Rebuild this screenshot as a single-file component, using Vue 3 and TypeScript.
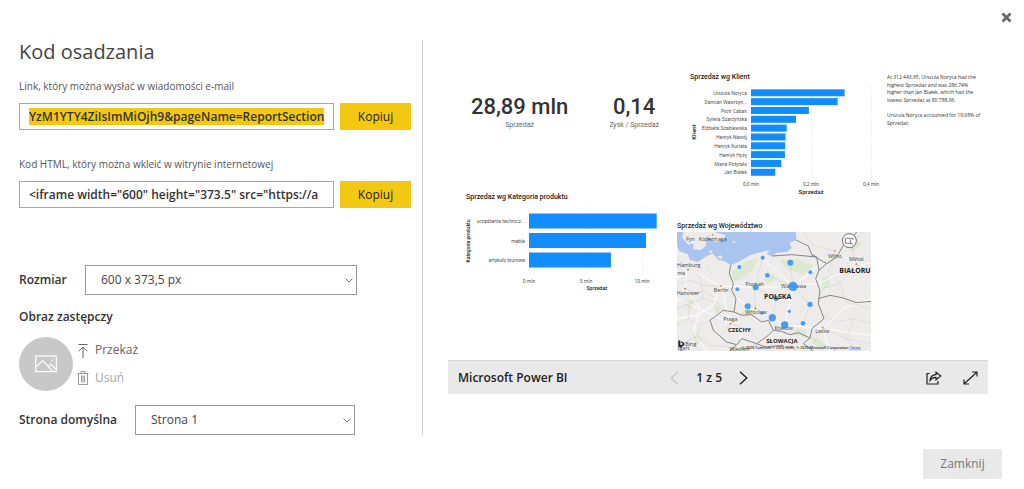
<script setup lang="ts">
import { onMounted, ref } from 'vue'

interface Bar {
  label: string
  value: number
}

const linkInput = ref<HTMLInputElement | null>(null)
const linkCode = ref('YzM1YTY4ZiIsImMiOjh9&pageName=ReportSection')
const htmlCode = ref('<iframe width="600" height="373.5" src="https://a')
const size = ref('600 x 373,5 px')
const page = ref('Strona 1')

const clients: Bar[] = [
  { label: 'Urszula Noryca', value: 0.312 },
  { label: 'Damian Wawrzyn...', value: 0.289 },
  { label: 'Piotr Caban', value: 0.193 },
  { label: 'Sylwia Szarzyńska', value: 0.15 },
  { label: 'Elżbieta Szablewska', value: 0.119 },
  { label: 'Henryk Nawój', value: 0.115 },
  { label: 'Henryk Kuriata', value: 0.114 },
  { label: 'Henryk Hyży', value: 0.113 },
  { label: 'Maria Potyrało', value: 0.101 },
  { label: 'Jan Białek', value: 0.081 },
]

const categories: Bar[] = [
  { label: 'urządzenia technicz...', value: 11.3 },
  { label: 'meble', value: 10.35 },
  { label: 'artykuły biurowe', value: 7.25 },
]

const bubbles: [number, number, number][] = [
  [208, 155, 6], [278, 127, 6], [361, 142, 9], [421, 171, 6], [292, 180, 7],
  [257, 216, 9], [202, 222, 6], [369, 213, 14], [319, 249, 8], [420, 267, 8],
  [233, 273, 9], [276, 293, 5], [358, 288, 5], [307, 307, 11], [344, 329, 11], [399, 324, 7],
]

const cities: [string, number, number][] = [
  ['Kopenhaga', 128, 77], ['Hamburg', 56, 155], ['Berlin', 153, 231], ['Hanower', 54, 238],
  ['Poznań', 254, 211], ['Warszawa', 371, 219], ['Wrocław', 258, 297], ['Praga', 181, 316],
  ['Kraków', 341, 345], ['Lwów', 457, 354], ['Wilno', 495, 127], ['Mińsk', 559, 136],
  ['Wiedeń', 207, 406], ['Fyn', 61, 77], ['ma', 34, 178], ['tgart', 41, 405],
]

const cityDots: [number, number][] = [
  [128, 59], [54, 163], [153, 212], [46, 220], [181, 325], [495, 107], [559, 146], [458, 337], [256, 280], [237, 401],
]

onMounted(() => {
  linkInput.value?.focus({ preventScroll: true })
  linkInput.value?.select()
})
</script>

<template>
  <div class="dialog">
    <header class="dialog-head">
      <button class="close" type="button" aria-label="Zamknij okno">
        <svg width="11" height="11" viewBox="0 0 11 11">
          <path d="M1.5 1.5 L9.5 9.5 M9.5 1.5 L1.5 9.5" stroke="#666" stroke-width="2.6" fill="none" />
        </svg>
      </button>
    </header>

    <main class="dialog-body">
      <section class="settings">
        <h1>Kod osadzania</h1>

        <div class="field">
          <label for="link">Link, który można wysłać w wiadomości e-mail</label>
          <div class="code-row">
            <input id="link" ref="linkInput" v-model="linkCode" class="code" type="text" readonly />
            <button class="copy" type="button">Kopiuj</button>
          </div>
        </div>

        <div class="field">
          <label for="html">Kod HTML, który można wkleić w witrynie internetowej</label>
          <div class="code-row">
            <input id="html" v-model="htmlCode" class="code" type="text" readonly />
            <button class="copy" type="button">Kopiuj</button>
          </div>
        </div>

        <div class="option size-option">
          <label for="size">Rozmiar</label>
          <div class="picker">
            <select id="size" v-model="size">
              <option>600 x 373,5 px</option>
            </select>
            <svg width="8" height="5" viewBox="0 0 8 5"><path d="M.5 .5 L4 4 L7.5 .5" stroke="#777" fill="none" /></svg>
          </div>
        </div>

        <h2>Obraz zastępczy</h2>
        <div class="placeholder">
          <div class="thumb">
            <svg width="22" height="18" viewBox="0 0 22 18" fill="none" stroke="#fff">
              <rect x=".7" y="1" width="20.6" height="15.6" stroke-width="1.2" />
              <path d="M1 12 L7.5 5.5 L18 16.3 M13.4 11.6 L15.8 9.2 L21 14.5" stroke-width="1.2" />
              <circle cx="17" cy="5.2" r=".5" />
            </svg>
          </div>
          <div class="thumb-actions">
            <button type="button">
              <svg width="12" height="16" viewBox="0 0 12 16" fill="none" stroke="#666">
                <path d="M1.5 2.5 H10.5 M6 16 V5 M1.8 9.2 L6 5 L10.2 9.2" />
              </svg>
              Przekaż
            </button>
            <button type="button" disabled>
              <svg width="12" height="16" viewBox="0 0 12 16" fill="none" stroke="#999">
                <path d="M.5 3.5 H11.5 M4 3 V1.5 H8 V3 M1.5 3.5 V14.5 H10.5 V3.5 M4.5 5.5 V12.5 M6 5.5 V12.5 M7.5 5.5 V12.5" />
              </svg>
              Usuń
            </button>
          </div>
        </div>

        <div class="option page-option">
          <label for="page">Strona domyślna</label>
          <div class="picker">
            <select id="page" v-model="page">
              <option>Strona 1</option>
            </select>
            <svg width="8" height="5" viewBox="0 0 8 5"><path d="M.5 .5 L4 4 L7.5 .5" stroke="#777" fill="none" /></svg>
          </div>
        </div>
      </section>

      <section class="preview">
        <div class="report">
          <div class="report-left">
            <div class="kpis">
              <div class="kpi"><strong>28,89 mln</strong><span>Sprzedaż</span></div>
              <div class="kpi"><strong>0,14</strong><span>Zysk / Sprzedaż</span></div>
            </div>
            <h3>Sprzedaż wg Kategoria produktu</h3>
            <svg class="chart" width="205" height="90" viewBox="0 0 205 90">
              <path class="grid" d="M63.5 4 V72 M119.5 4 V72 M176.5 4 V72" />
              <g v-for="(c, i) in categories" :key="c.label">
                <text class="tick end" x="59" :y="20 + i * 19.5">{{ c.label }}</text>
                <rect class="bar" x="63" :y="10.5 + i * 19.5" :width="c.value * 11.3" height="15" />
              </g>
              <text class="tick mid" x="63" y="80">0 mln</text>
              <text class="tick mid" x="120" y="80">5 mln</text>
              <text class="tick mid" x="176" y="80">10 mln</text>
              <text class="axis small mid" x="131" y="87">Sprzedaż</text>
              <text class="axis small mid" transform="translate(4 38) rotate(-90)">Kategoria produktu</text>
            </svg>
          </div>

          <div class="report-right">
            <div class="client-row">
              <div>
                <h3 class="indented">Sprzedaż wg Klient</h3>
                <svg class="chart" width="208" height="115" viewBox="0 0 208 115">
                  <path class="grid" d="M74.5 4 V96 M134.5 4 V96 M194.5 4 V96" />
                  <g v-for="(c, i) in clients" :key="c.label">
                    <text class="tick end" x="70" :y="12 + i * 8.83">{{ c.label }}</text>
                    <rect class="bar" x="74" :y="6.3 + i * 8.83" :width="c.value * 300" height="7" />
                  </g>
                  <text class="tick mid" x="74" y="103">0,0 mln</text>
                  <text class="tick mid" x="134" y="103">0,2 mln</text>
                  <text class="tick mid" x="194" y="103">0,4 mln</text>
                  <text class="axis mid" x="134" y="111">Sprzedaż</text>
                  <text class="axis mid" transform="translate(19 49) rotate(-90)">Klient</text>
                </svg>
              </div>
              <div class="story">
                <p>At 312 443,95, Urszula Noryca had the highest Sprzedaż and was 286,74% higher than Jan Białek, which had the lowest Sprzedaż at 80 788,96.</p>
                <p>Urszula Noryca accounted for 19,68% of Sprzedaż.</p>
              </div>
            </div>
            <h3>Sprzedaż wg Województwo</h3>
            <svg class="map" width="194" height="119" viewBox="21 50 582 357">
              <rect x="21" y="50" width="582" height="357" fill="#eeecea" />
              <g fill="#dce8cf">
                <path d="M185 170 L225 140 L262 125 L250 160 L215 190 L190 200 Z" />
                <path d="M330 135 L380 130 L430 150 L400 180 L350 160 Z" />
                <path d="M225 280 L262 270 L250 298 L210 300 Z M420 360 L450 375 L480 400 L440 398 Z" />
                <path d="M40 260 L70 250 L62 285 Z M130 265 L160 280 L140 295 Z M455 190 L475 180 L480 210 L458 225 Z M530 95 L560 70 L575 88 L548 108 Z M60 340 L100 370 L80 390 Z" />
                <path d="M375 340 L410 345 L405 365 L365 358 Z M280 190 L310 175 L318 195 L290 205 Z" />
              </g>
              <path fill="#a9c4ee" d="M135 50 H378 L379 74 L358 82 L365 98 L350 110 L318 112 L308 124 L290 115 L300 104 L282 108 L240 120 L205 140 L182 150 L168 140 L145 133 L128 115 L110 122 L84 140 L60 134 L52 115 L28 108 L21 92 V50 H40 L36 66 L55 88 L72 84 L68 102 L92 104 L108 92 L100 75 L112 62 L136 80 L160 74 L167 60 Z" />
              <path fill="#eeecea" d="M45 62 L66 56 L80 70 L72 86 L52 84 Z M86 62 L105 54 L112 78 L102 94 L84 88 Z M116 108 L128 105 L125 115 Z M140 124 L154 120 L158 132 Z M186 80 L194 76 L196 84 Z" />
              <g fill="none" stroke="#fff" stroke-width="3">
                <path d="M21 190 L60 165 L153 212 L254 216 L369 213 L445 205 L520 170 L603 140 M153 212 L181 325 L237 401 M153 212 L233 273 L307 307 L344 329 L457 340 L603 360 M369 213 L344 329 M369 213 L278 127 M369 213 L421 171 L495 107 L560 146 M21 250 L90 280 L181 325 M21 310 L80 300 L130 270 L153 212 L120 160 M50 163 L46 220 L90 280 L70 350 L110 407 M457 340 L520 280 L603 250 M457 340 L480 407" />
              </g>
              <g fill="none" stroke="#d1ccc8" stroke-width="1.5">
                <path d="M21 205 L62 195 L98 210 L153 212 L190 240 M25 130 L54 163 L90 185 L100 250 L60 265 L21 280 M46 220 L75 235 L105 225 L130 245 M60 265 L55 310 L90 330 L125 310 M21 330 L55 310 M90 330 L80 365 L40 380 M80 365 L120 390 L180 395 M100 250 L145 265 L180 300 M254 216 L278 127 M254 216 L256 280 L307 307 M292 180 L369 213 L361 142 M254 216 L319 249 L369 213 L420 267 L399 324 M319 249 L307 307 M456 220 L510 205 L559 146 L603 170 M559 146 L545 90 L575 50 M495 107 L430 90 L400 50 M495 107 L475 170 L510 205 L530 260 L603 280 M460 300 L500 320 L550 310 L603 325 M458 337 L430 385 M458 337 L530 370 L560 407 M550 310 L530 370 L603 385 M181 325 L240 345 L270 380 L237 401 M181 325 L150 365 L170 385 M110 150 L153 212" />
              </g>
              <g fill="none" stroke="#858585" stroke-width="3" stroke-linejoin="round">
                <path d="M182 150 L178 175 L190 205 L185 225 L198 250 L192 290 L215 300 L245 298 L275 320 L295 315 L310 345 L335 348 L360 358 L385 352 L420 368 L426 340 L462 310 L445 265 L450 225 L437 190 L447 165 L440 125 L365 118 L308 122" />
                <path d="M192 290 L160 285 L120 315 L130 345 L170 380 L200 388 L215 370 L260 385 L295 360 L310 345 M200 388 L180 407 M260 385 L285 395 L340 390 M378 74 L415 92 L425 118 L440 125 M425 118 L470 145 L500 125 L520 90 L545 70 L560 50 M470 145 L447 165 M445 250 L480 240 L520 248 L560 262 L603 258 M420 368 L400 385 L430 407" />
              </g>
              <circle v-for="(d, i) in cityDots" :key="'d' + i" :cx="d[0]" :cy="d[1]" r="2.5" fill="#ef5a32" />
              <text v-for="c in cities" :key="c[0]" class="city" :x="c[1]" :y="c[2]">{{ c[0] }}</text>
              <circle v-for="(b, i) in bubbles" :key="'b' + i" :cx="b[0]" :cy="b[1]" :r="b[2]" fill="#2f8df0" fill-opacity=".85" />
              <text class="country" x="323" y="251">POLSKA</text>
              <text class="country minor" x="208" y="349">CZECHY</text>
              <text class="country minor" x="336" y="382">SŁOWACJA</text>
              <text class="country start" x="508" y="172">BIAŁORU</text>
              <circle cx="538" cy="76" r="21" fill="#fff" stroke="#555" stroke-width="2.5" />
              <path d="M540 84 H526 V69 H549 V74 M541 72 V86 L545 83 L548 88" fill="none" stroke="#444" stroke-width="2" />
              <path d="M25 374 L31 377 V390 L40 386 L34 382 L32 377 L43 383 V389 L31 397 L25 393 Z" fill="#222" />
              <text class="bing" x="46" y="391">Bing</text>
              <text class="credit" x="572" y="400">© 2020 TomTom © 2020 HERE, © 2020 Microsoft Corporation <tspan class="terms">Terms</tspan></text>
            </svg>
          </div>
        </div>

        <div class="toolbar">
          <strong>Microsoft Power BI</strong>
          <nav class="pager">
            <button type="button" disabled aria-label="Poprzednia strona">
              <svg width="9" height="14" viewBox="0 0 9 14"><path d="M8 .7 L1.2 7 L8 13.3" fill="none" stroke="#c4c4c4" stroke-width="1.2" /></svg>
            </button>
            <span>1 z 5</span>
            <button type="button" aria-label="Następna strona">
              <svg width="9" height="14" viewBox="0 0 9 14"><path d="M1 .7 L7.8 7 L1 13.3" fill="none" stroke="#222" stroke-width="1.4" /></svg>
            </button>
          </nav>
          <div class="actions">
            <button type="button" aria-label="Udostępnij">
              <svg width="16" height="14" viewBox="0 0 16 14" fill="none" stroke="#222" stroke-width="1.2">
                <path d="M3.5 2.5 H1 V13 H12 V10" />
                <path d="M4 9.5 C4.3 5.8 6.5 3.8 10 3.7 V1.2 L14.8 5 L10 8.8 V6.4 C7.5 6.3 5.5 7.3 4 9.5 Z" />
              </svg>
            </button>
            <button type="button" aria-label="Pełny ekran">
              <svg width="15" height="14" viewBox="0 0 15 14" fill="none" stroke="#222" stroke-width="1.2">
                <path d="M1.2 12.8 L13.8 1.2 M9 1 H14 V5.6 M1 8.4 V13 H6" />
              </svg>
            </button>
          </div>
        </div>
      </section>
    </main>

    <footer class="dialog-foot">
      <button type="button">Zamknij</button>
    </footer>
  </div>
</template>

<style>
body {
  background: #fff;
}
</style>

<style scoped>
.dialog {
  font-family: "Open Sans", "Noto Sans", sans-serif;
  font-size: 12px;
  line-height: 16px;
  color: #333;
}
.dialog * {
  box-sizing: border-box;
}
button {
  font: inherit;
  border: 0;
  padding: 0;
  background: none;
}
svg {
  display: block;
  flex: none;
}
.dialog-head {
  height: 40px;
  padding: 12px 12px 0;
  display: flex;
  justify-content: flex-end;
  align-items: flex-start;
}
.dialog-body {
  display: grid;
  grid-template-columns: 404px 1fr;
  padding: 0 36px 0 19px;
}
.settings {
  border-right: 1px solid #d0d0d0;
}
h1 {
  margin: 0 0 14px;
  font-size: 20px;
  line-height: 24px;
  font-weight: 400;
  color: #444;
}
.field {
  display: flex;
  flex-direction: column;
  gap: 9px;
  margin-bottom: 26px;
  padding-right: 11px;
}
.field label {
  font-size: 10px;
  color: #555;
}
.code-row {
  display: flex;
  gap: 6px;
}
.code {
  flex: 1;
  min-width: 0;
  height: 27px;
  padding: 0 9px;
  border: 1px solid #a6a6a6;
  outline: 0;
  font: 600 12px/17px "Open Sans", "Noto Sans", sans-serif;
  color: #333;
}
.code::selection {
  background: #f2c811;
  color: #333;
}
.copy {
  width: 71px;
  background: #f2c811;
  color: #222;
}
.option {
  display: flex;
  align-items: center;
}
.option label,
h2 {
  font-size: 12px;
  font-weight: 600;
  color: #333;
}
.size-option {
  margin-top: 57px;
}
.size-option label {
  width: 66px;
}
.size-option .picker {
  width: 272px;
}
.page-option {
  margin-top: 14px;
}
.page-option label {
  width: 116px;
}
.page-option .picker {
  width: 220px;
}
.picker {
  display: grid;
  align-items: center;
}
.picker select,
.picker svg {
  grid-area: 1 / 1;
}
.picker svg {
  justify-self: end;
  margin-right: 4px;
  pointer-events: none;
}
select {
  appearance: none;
  width: 100%;
  height: 30px;
  padding: 0 15px;
  border: 1px solid #999;
  border-radius: 0;
  background: #fff;
  font: 400 12px/18px "Open Sans", "Noto Sans", sans-serif;
  color: #444;
}
h2 {
  margin: 14px 0 12px;
}
.placeholder {
  display: flex;
  gap: 4px;
}
.thumb {
  width: 54px;
  height: 54px;
  border-radius: 50%;
  background: #c8c8c8;
  display: grid;
  place-items: center;
}
.thumb-actions {
  display: flex;
  flex-direction: column;
  gap: 12px;
  padding-top: 5px;
}
.thumb-actions button {
  display: flex;
  align-items: center;
  gap: 6px;
  color: #666;
}
.thumb-actions button:disabled {
  color: #a6a6a6;
}
.preview {
  margin-left: 25px;
}
.report {
  display: grid;
  grid-template-columns: 229px 1fr;
  padding: 31px 0 9px;
  font-family: Roboto, "Open Sans", sans-serif;
}
.report-left {
  padding: 24px 0 0 18px;
}
.kpis {
  display: grid;
  grid-template-columns: 5fr 4fr;
  gap: 18px;
  margin-bottom: 61px;
}
.kpi {
  display: flex;
  flex-direction: column;
  align-items: center;
  gap: 1px;
  white-space: nowrap;
}
.kpi strong {
  font-size: 22px;
  line-height: 24px;
  font-weight: 500;
}
.kpi span {
  font-size: 7px;
  line-height: 10px;
  color: #666;
}
h3 {
  margin: 0;
  font-size: 7px;
  line-height: 12px;
  font-weight: 500;
  color: #222;
}
.indented {
  padding-left: 13px;
}
.client-row {
  display: flex;
  gap: 2px;
  margin-bottom: 22px;
}
.bar {
  fill: #118dff;
}
.grid {
  fill: none;
  stroke: #e4e4e4;
  stroke-dasharray: 1 2;
}
.tick {
  font-size: 5px;
  fill: #555;
}
.axis {
  font-size: 6px;
  font-weight: 500;
  fill: #222;
}
.axis.small {
  font-size: 5px;
}
.end {
  text-anchor: end;
}
.mid {
  text-anchor: middle;
}
.story {
  flex: 1;
  padding: 3px 4px 0 0;
  font-family: "Open Sans", "Noto Sans", sans-serif;
  font-size: 5px;
  line-height: 1.5;
  color: #333;
}
.story p {
  margin: 0 0 8px;
}
.map {
  font-family: "Open Sans", "Noto Sans", sans-serif;
}
.city {
  font-size: 16px;
  fill: #444;
  text-anchor: middle;
}
.country {
  font-size: 21px;
  font-weight: 700;
  fill: #222;
  text-anchor: middle;
}
.country.minor {
  font-size: 18px;
}
.country.start {
  text-anchor: start;
}
.bing {
  font-size: 16px;
  fill: #444;
}
.credit {
  font-size: 11px;
  font-weight: 600;
  fill: #222;
  text-anchor: end;
}
.terms {
  fill: #1668c7;
  text-decoration: underline;
}
.toolbar {
  display: grid;
  grid-template-columns: 12fr 78px 13fr;
  align-items: center;
  height: 34px;
  padding: 0 10px;
  border-top: 1px solid #d6d6d6;
  background: #e9e9e9;
  font-size: 12px;
  color: #222;
}
.toolbar strong,
.pager {
  font-weight: 600;
}
.pager {
  display: flex;
  align-items: center;
  justify-content: space-between;
}
.actions {
  display: flex;
  justify-content: flex-end;
  gap: 21px;
}
.dialog-foot {
  display: flex;
  justify-content: flex-end;
  padding: 14px 22px 10px;
}
.dialog-foot button {
  width: 79px;
  height: 30px;
  background: #e9e9e9;
  color: #777;
}
</style>
